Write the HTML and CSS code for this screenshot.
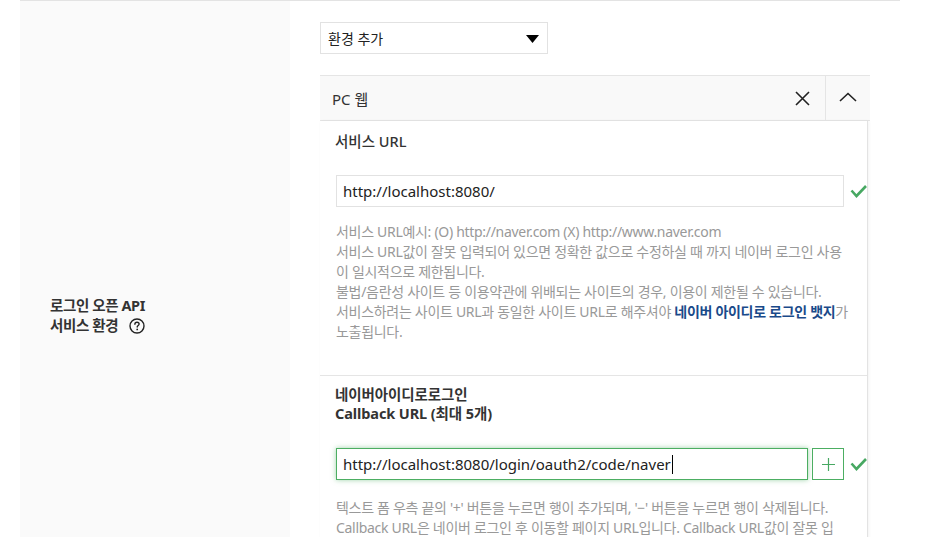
FILE: index.html
```html
<!DOCTYPE html>
<html lang="ko">
<head>
<meta charset="utf-8">
<title>로그인 오픈 API 서비스 환경</title>
<link rel="stylesheet" href="styles.css">
</head>
<body>
<div class="table">
  <div class="row">
    <div class="th">
      <div class="label">로그인 오픈 API<br>서비스 환경<span class="help-icon"><svg width="16" height="16" viewBox="0 0 16 16"><circle cx="8" cy="8" r="7" fill="none" stroke="#222" stroke-width="1.4"/><path d="M5.9 6.2c0-1.3 1-2 2.1-2s2.1.7 2.1 1.9c0 1.4-1.9 1.5-1.9 3" fill="none" stroke="#222" stroke-width="1.4" stroke-linecap="round"/><circle cx="8.2" cy="11.4" r="0.9" fill="#222"/></svg></span></div>
    </div>
    <div class="td">
      <div class="select"><span>환경 추가</span><svg class="select-arrow" width="13" height="8" viewBox="0 0 13 8"><path d="M0 0h13L6.5 8z" fill="#000"/></svg></div>
      <div class="panel">
        <div class="panel-head">
          <span class="panel-title">PC 웹</span>
          <button class="icon-btn" type="button"><svg width="15" height="15" viewBox="0 0 15 15"><path d="M1 1l13 13M14 1L1 14" stroke="#222" stroke-width="1.6"/></svg></button>
          <button class="icon-btn toggle" type="button"><svg width="18" height="10" viewBox="0 0 18 10"><path d="M1 9L9 1.5 17 9" fill="none" stroke="#222" stroke-width="1.6"/></svg></button>
        </div>
        <div class="panel-body">
          <div class="section">
            <div class="sec-title medium">서비스 URL</div>
            <div class="field-row">
              <div class="input wide">http://localhost:8080/</div>
              <svg class="check" width="17" height="13" viewBox="0 0 17 13"><path d="M1.5 5.5l5 5.5L16 1" fill="none" stroke="#47a862" stroke-width="2.6"/></svg>
            </div>
            <p class="help">서비스 URL예시: (O) http://naver.com (X) http://www.naver.com<br>서비스 URL값이 잘못 입력되어 있으면 정확한 값으로 수정하실 때 까지 네이버 로그인 사용<br>이 일시적으로 제한됩니다.<br>불법/음란성 사이트 등 이용약관에 위배되는 사이트의 경우, 이용이 제한될 수 있습니다.<br>서비스하려는 사이트 URL과 동일한 사이트 URL로 해주셔야 <strong class="link">네이버 아이디로 로그인 뱃지</strong>가<br>노출됩니다.</p>
          </div>
          <div class="section second">
            <div class="sec-title bold tight">네이버아이디로로그인<br>Callback URL (최대 5개)</div>
            <div class="field-row cb">
              <div class="input focus">http://localhost:8080/login/oauth2/code/naver<span class="caret"></span></div>
              <button class="plus" type="button"><svg width="13" height="13" viewBox="0 0 13 13"><path d="M6.5 0v13M0 6.5h13" stroke="#47a862" stroke-width="1.2"/></svg></button>
              <svg class="check" width="17" height="13" viewBox="0 0 17 13"><path d="M1.5 5.5l5 5.5L16 1" fill="none" stroke="#47a862" stroke-width="2.6"/></svg>
            </div>
            <p class="help cb-help">텍스트 폼 우측 끝의 '+' 버튼을 누르면 행이 추가되며, '−' 버튼을 누르면 행이 삭제됩니다.<br>Callback URL은 네이버 로그인 후 이동할 페이지 URL입니다. Callback URL값이 잘못 입</p>
          </div>
        </div>
      </div>
    </div>
  </div>
</div>
</body>
</html>
```
FILE: styles.css
```css
html, body {
  margin: 0;
  padding: 0;
  background: #fff;
  overflow: hidden;
}
body {
  font-family: "Noto Sans", "Noto Sans CJK KR", sans-serif;
  color: #333;
  height: 537px;
}
.table {
  margin-left: 20px;
  width: 880px;
  border-top: 1px solid #e3e3e3;
}
.row {
  display: grid;
  grid-template-columns: 270px 1fr;
  min-height: 536px;
}
.th {
  background: #fafafa;
  padding: 294px 0 0 30px;
}
.label {
  font-size: 14.5px;
  line-height: 20px;
  font-weight: 700;
  color: #333;
  letter-spacing: -0.4px;
}
.help-icon {
  display: inline-block;
  vertical-align: -3px;
  margin-left: 11px;
  width: 16px;
  height: 16px;
}
.help-icon svg { display: block; }
.td {
  padding: 21px 0 0 30px;
}
.select {
  box-sizing: border-box;
  width: 228px;
  height: 32px;
  border: 1px solid #e2e2e2;
  display: flex;
  align-items: center;
  justify-content: space-between;
  padding: 0 8px 0 7px;
  font-size: 14px;
  color: #222;
}
.select-arrow { display: block; margin-top: 1px; }
.panel {
  margin-top: 21px;
  width: 550px;
}
.panel-head {
  box-sizing: border-box;
  height: 46px;
  border-top: 1px solid #e5e5e5;
  border-bottom: 1px solid #e5e5e5;
  background: #f9f9f9;
  display: flex;
  align-items: stretch;
}
.panel-title {
  flex: 1;
  display: flex;
  align-items: center;
  padding-left: 12px;
  font-size: 15px;
  color: #333;
}
.icon-btn {
  width: 45px;
  border: 0;
  padding: 0;
  background: transparent;
  display: flex;
  align-items: center;
  justify-content: center;
}
.icon-btn svg { display: block; }
.icon-btn.toggle {
  border-left: 1px solid #e5e5e5;
  width: 45px;
  padding-bottom: 3px;
}
.panel-body {
  box-sizing: border-box;
  width: 548px;
  border-right: 1px solid #e3e3e3;
  box-shadow: 1px 0 3px rgba(0, 0, 0, 0.05);
  overflow: hidden;
}
.section {
  padding: 10px 0 33px 16px;
}
.section.second {
  border-top: 1px solid #e5e5e5;
  padding: 9px 0 20px 16px;
}
.sec-title {
  font-size: 14.5px;
  line-height: 20px;
  color: #333;
  margin-left: -1px;
}
.sec-title.medium { font-weight: 500; }
.sec-title.bold { font-weight: 700; letter-spacing: -0.1px; }
.sec-title.tight { line-height: 19px; }
.field-row {
  margin-top: 24px;
  display: flex;
  align-items: center;
  white-space: nowrap;
}
.field-row.cb { margin-top: 25px; }
.input {
  box-sizing: border-box;
  height: 32px;
  border: 1px solid #e2e2e2;
  padding-left: 6px;
  display: flex;
  align-items: center;
  font-family: "Noto Sans", sans-serif;
  font-size: 15px;
  color: #222;
}
.input.wide { width: 510px; }
.input.focus {
  width: 474px;
  border-color: #4cae62;
  box-shadow: 0 0 5px rgba(76, 174, 98, 0.55);
}
.caret {
  display: inline-block;
  width: 1px;
  height: 19px;
  background: #000;
  margin-left: 1px;
}
.plus {
  box-sizing: border-box;
  width: 32px;
  height: 32px;
  margin-left: 4px;
  border: 1px solid #4cae62;
  background: #fff;
  padding: 0;
  display: flex;
  align-items: center;
  justify-content: center;
}
.plus svg { display: block; margin-top: 1px; }
.check {
  display: block;
  margin-left: 6px;
  flex: none;
}
.help {
  margin: 15px 0 0;
  font-size: 14px;
  line-height: 20px;
  color: #999;
  letter-spacing: -0.3px;
  white-space: nowrap;
}
.help.cb-help { margin-top: 18px; }
.link {
  color: #1a4a8a;
  font-weight: 700;
}
```
